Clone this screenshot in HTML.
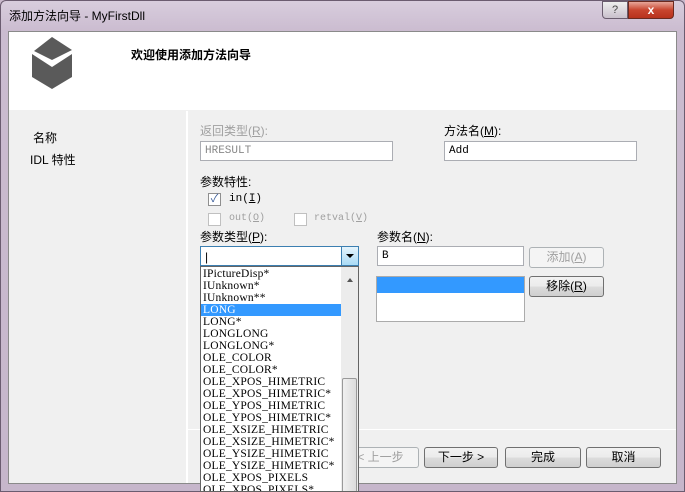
<!DOCTYPE html>
<html><head><meta charset="utf-8"><style>
*{margin:0;padding:0;box-sizing:border-box}
body{width:685px;height:492px;overflow:hidden;position:relative;background:#c9b9cc;font-family:"Liberation Sans","Noto Sans CJK SC",sans-serif;font-size:12px;color:#000}
.a{position:absolute}
.frame{left:0;top:0;width:685px;height:492px;background:linear-gradient(180deg,#d8cddd 0,#cbbcd0 30px,#c6b6cb 100%);border:1px solid #6b5c70;border-radius:6px 6px 0 0}
.mono{font-family:"Liberation Mono","Noto Sans CJK SC",monospace;font-size:11px}
.inp{background:#fff;border:1px solid #abadb3;height:20px;padding:3px 4px 0}
.btn{border:1px solid #707070;border-radius:3px;background:linear-gradient(#f2f2f2,#ebebeb 50%,#dcdcdc 51%,#cfcfcf);height:21px;text-align:center;line-height:19px}
.dis{color:#a0a0a0;border-color:#adb2b5;background:#f4f4f4}
.li{height:12px;line-height:12px;padding-left:2px;font-family:"Liberation Serif",serif;font-size:11.5px;letter-spacing:0.2px;white-space:nowrap}
.cb{width:13px;height:13px;border:1px solid #8f8f8f;background:#fff}
</style></head><body>
<div class="a frame"></div>
<div class="a" style="left:9px;top:7px;font-size:12px">添加方法向导 - MyFirstDll</div>
<div class="a" style="left:602px;top:1px;width:26px;height:18px;border:1px solid #6a5c6e;border-radius:0 0 0 4px;background:linear-gradient(#eee,#c9c0cc);text-align:center;font-size:11px;line-height:16px;color:#444">?</div>
<div class="a" style="left:628px;top:1px;width:46px;height:18px;border:1px solid #6b2a20;border-radius:0 0 4px 0;background:linear-gradient(#e7a79a,#c8452f 50%,#b8321d);text-align:center;color:#fff;font-weight:bold;font-size:12px;line-height:16px">x</div>
<div class="a" style="left:8px;top:31px;width:669px;height:453px;background:#f0f0f0;border:1px solid #8a8a8a"></div>
<div class="a" style="left:9px;top:32px;width:667px;height:78px;background:#fff"></div>
<svg class="a" style="left:0;top:0" width="80" height="100" viewBox="0 0 80 100"><polygon points="52,37 72,50 52,60 34,51" fill="#5a5a5a"/><polygon points="32,54 52,67 72,54 72,77 52,89 32,77" fill="#5a5a5a"/></svg>
<div class="a" style="left:131px;top:46px;font-weight:bold;font-size:12px">欢迎使用添加方法向导</div>
<div class="a" style="left:186px;top:111px;width:2px;height:372px;background:#fff"></div>
<div class="a" style="left:33px;top:129px">名称</div>
<div class="a" style="left:30px;top:151px">IDL 特性</div>
<div class="a" style="left:188px;top:429px;width:488px;height:1px;background:#fff"></div>
<div class="a" style="left:200px;top:122px;color:#a0a0a0">返回类型(<u>R</u>):</div>
<div class="a inp mono" style="left:200px;top:141px;width:193px;color:#888">HRESULT</div>
<div class="a" style="left:444px;top:122px">方法名(<u>M</u>):</div>
<div class="a inp mono" style="left:444px;top:141px;width:193px">Add</div>
<div class="a" style="left:200px;top:173px">参数特性:</div>
<div class="a cb" style="left:208px;top:193px;color:#3a5d9a;font-size:11px;line-height:11px;text-align:center">✓</div>
<div class="a mono" style="left:229px;top:193px">in(<u>I</u>)</div>
<div class="a cb" style="left:208px;top:213px;border-color:#c0c0c0"></div>
<div class="a mono" style="left:229px;top:213px;color:#a0a0a0;font-size:10px">out(<u>O</u>)</div>
<div class="a cb" style="left:294px;top:213px;border-color:#c0c0c0"></div>
<div class="a mono" style="left:314px;top:213px;color:#a0a0a0;font-size:10px">retval(<u>V</u>)</div>
<div class="a" style="left:200px;top:228px">参数类型(<u>P</u>):</div>
<div class="a inp" style="left:200px;top:246px;width:159px;border-color:#3c7fb1">|</div>
<div class="a" style="left:341px;top:247px;width:17px;height:18px;background:linear-gradient(#e5f4fc,#a9dbf6);border-left:1px solid #3c7fb1"><div style="margin:7px 0 0 4px;width:0;height:0;border:4px solid transparent;border-top:4px solid #000"></div></div>
<div class="a" style="left:377px;top:228px">参数名(<u>N</u>):</div>
<div class="a inp mono" style="left:377px;top:246px;width:147px">B</div>
<div class="a btn dis" style="left:529px;top:247px;width:75px">添加(<u>A</u>)</div>
<div class="a" style="left:376px;top:276px;width:149px;height:46px;background:#fff;border:1px solid #ababab"><div style="height:16px;background:#3399ff"></div></div>
<div class="a btn" style="left:529px;top:276px;width:75px">移除(<u>R</u>)</div>
<div class="a btn dis" style="left:342px;top:447px;width:77px">&lt; 上一步</div>
<div class="a btn" style="left:424px;top:447px;width:74px">下一步 &gt;</div>
<div class="a btn" style="left:505px;top:447px;width:76px">完成</div>
<div class="a btn" style="left:586px;top:447px;width:75px">取消</div>
<div class="a" style="left:200px;top:266px;width:159px;height:226px;background:#fff;border:1px solid #646464;overflow:hidden">
<div class="li" style="margin-top:1px">IPictureDisp*</div><div class="li">IUnknown*</div><div class="li">IUnknown**</div>
<div class="li" style="background:#3399ff;color:#fff;width:140px">LONG</div>
<div class="li">LONG*</div><div class="li">LONGLONG</div><div class="li">LONGLONG*</div><div class="li">OLE_COLOR</div><div class="li">OLE_COLOR*</div><div class="li">OLE_XPOS_HIMETRIC</div><div class="li">OLE_XPOS_HIMETRIC*</div><div class="li">OLE_YPOS_HIMETRIC</div><div class="li">OLE_YPOS_HIMETRIC*</div><div class="li">OLE_XSIZE_HIMETRIC</div><div class="li">OLE_XSIZE_HIMETRIC*</div><div class="li">OLE_YSIZE_HIMETRIC</div><div class="li">OLE_YSIZE_HIMETRIC*</div><div class="li">OLE_XPOS_PIXELS</div><div class="li">OLE_XPOS_PIXELS*</div>
<div class="a" style="left:140px;top:0;width:17px;height:226px;background:#ececec"></div>
<div class="a" style="left:146px;top:8px;width:0;height:0;border:3px solid transparent;border-bottom:4px solid #555"></div>
<div class="a" style="left:141px;top:111px;width:15px;height:115px;background:linear-gradient(90deg,#f0f0f0,#dcdcdc);border:1px solid #999;border-radius:2px"></div>
</div>
</body></html>
